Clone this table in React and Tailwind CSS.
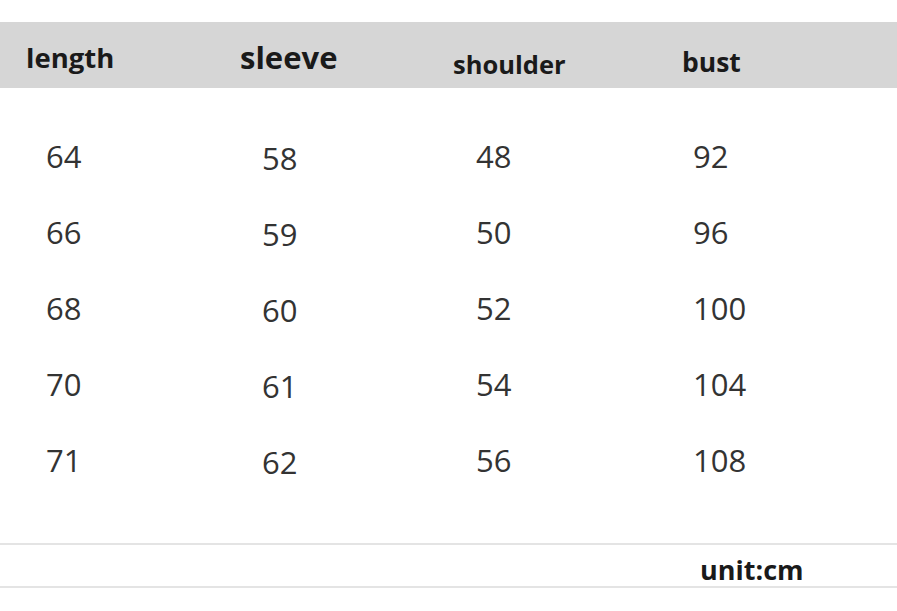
const cols = [
  { label: 'length', size: 'text-[27.5px]', hpad: 'pl-[26px]', hpt: 'pt-[6px]', npad: 'pl-[46px]', npt: 'pt-0', values: [64, 66, 68, 70, 71] },
  { label: 'sleeve', size: 'text-[31px]', hpad: 'pl-[24px]', hpt: 'pt-[5px]', npad: 'pl-[46px]', npt: 'pt-[2px]', values: [58, 59, 60, 61, 62] },
  { label: 'shoulder', size: 'text-[25.5px]', hpad: 'pl-[23px]', hpt: 'pt-[12px]', npad: 'pl-[46px]', npt: 'pt-0 -mt-[3px]', values: [48, 50, 52, 54, 56] },
  { label: 'bust', size: 'text-[26.5px]', hpad: 'pl-[22px]', hpt: 'pt-[10px]', npad: 'pl-[33px]', npt: 'pt-0 -mt-[3px]', values: [92, 96, 100, 104, 108] },
]

export default function App() {
  return (
    <div
      className="w-[897px] h-[611px] bg-white overflow-hidden pt-[22px]"
      style={{ fontFamily: '"Open Sans", "Noto Sans", sans-serif' }}
    >
      <div className="grid grid-cols-[216px_214px_230px_1fr]">
        {cols.map((c) => (
          <div key={c.label} className="flex flex-col">
            <div className={`h-[66px] bg-[#d6d6d6] ${c.hpad}`}>
              <div className={`${c.hpt} ${c.size} leading-[60px] font-bold text-[#1a1a1a]`}>{c.label}</div>
            </div>
            <div className={`mt-[30px] ${c.npad} ${c.npt}`}>
              {c.values.map((v) => (
                <div key={v} className="h-[76px] leading-[76px] text-[31px] text-[#333]">
                  {v}
                </div>
              ))}
            </div>
          </div>
        ))}
      </div>

      <div className="mt-[43px] border-t-2 border-b-2 border-[#e4e4e4] h-[45px] flex items-center pt-[7px]">
        <span className="ml-[700px] text-[27px] font-bold text-[#1a1a1a] leading-none">unit:cm</span>
      </div>
    </div>
  )
}
